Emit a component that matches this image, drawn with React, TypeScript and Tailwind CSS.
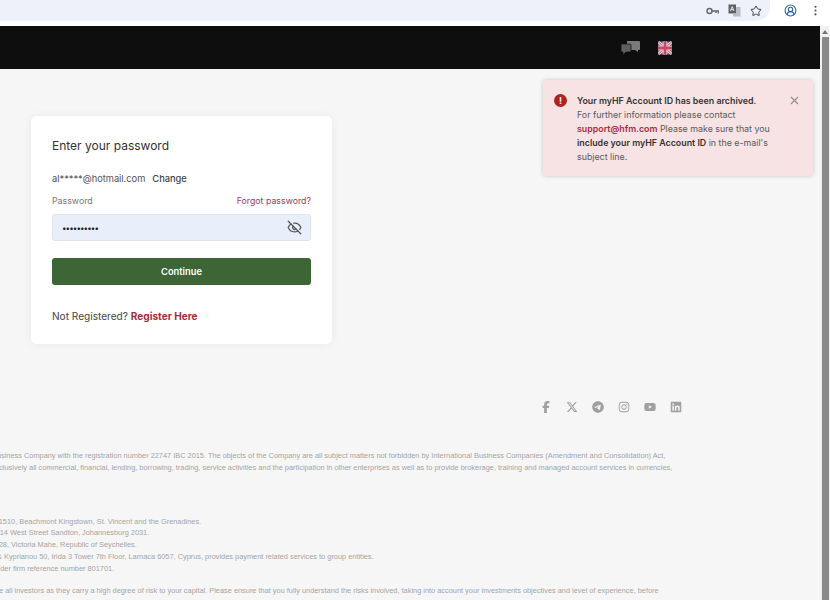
import React from 'react';
import { Star, EyeOff, X, CircleUserRound, EllipsisVertical } from 'lucide-react';
import { FaFacebookF, FaXTwitter, FaTelegram, FaInstagram, FaYoutube, FaLinkedin } from 'react-icons/fa6';

const legalTop = [
    { indent: '-ml-[8px]', text: 'Business Company with the registration number 22747 IBC 2015. The objects of the Company are all subject matters not forbidden by International Business Companies (Amendment and Consolidation) Act,' },
    { indent: '-ml-[23px]', text: 'and exclusively all commercial, financial, lending, borrowing, trading, service activities and the participation in other enterprises as well as to provide brokerage, training and managed account services in currencies,' },
];

const legalMiddle = [
    { indent: '-ml-[16px]', text: 'Box 1510, Beachmont Kingstown, St. Vincent and the Grenadines.' },
    { indent: '-ml-[12px]', text: 'at 114 West Street Sandton, Johannesburg 2031.' },
    { indent: '-ml-[16px]', text: 'Box 28, Victoria Mahe, Republic of Seychelles.' },
    { indent: '-ml-[3px]', text: '& Kyprianou 50, Irida 3 Tower 7th Floor, Larnaca 6057, Cyprus, provides payment related services to group entities.' },
    { indent: '-ml-[8px]', text: 'under firm reference number 801701.' },
];

function Flag() {
    return (
        <svg width="14" height="14" viewBox="0 0 15 14" className="rounded-[2px]">
            <rect width="15" height="14" fill="#5f6290" />
            <path d="M0 0l15 14M15 0L0 14" stroke="#e6d5dc" strokeWidth="3" />
            <path d="M0 0l15 14M15 0L0 14" stroke="#c9475f" strokeWidth="1" />
            <path d="M7.500 0v14M0 7h15" stroke="#e6d5dc" strokeWidth="5" />
            <path d="M7.500 0v14M0 7h15" stroke="#c9475f" strokeWidth="3" />
        </svg>
    );
}

function Chat() {
    return (
        <svg width="19" height="14" viewBox="0 0 19 14">
            <path d="M6 0h12a1 1 0 0 1 1 1v7a1 1 0 0 1-1 1h-1v2l-3-2H6z" fill="#7a7a7a" />
            <path d="M1 3h8a1 1 0 0 1 1 1v6a1 1 0 0 1-1 1H5l-3 3v-3H1a1 1 0 0 1-1-1V4a1 1 0 0 1 1-1z" stroke="#111" strokeWidth="0.8" fill="#5f5f5f" />
        </svg>
    );
}

function ChromeKey() {
    return (
        <svg width="13" height="8" viewBox="0 0 13 8" fill="none" stroke="#666a70" strokeWidth="1.500">
            <circle cx="3.500" cy="4" r="2.500" />
            <path d="M6 4h6.500v2.500M10 4v2" />
        </svg>
    );
}

function ChromeTranslate() {
    return (
        <svg width="13" height="13" viewBox="0 0 13 13">
            <rect x="0.500" y="0.500" width="7.500" height="9" fill="#5d6166" />
            <path d="M8 3h4.500v9.500H5V9.500h3z" fill="#b9bdc4" />
            <path d="M2.300 7l1.900-4.500L6 7M3 5.600h2.400" stroke="#fff" strokeWidth="0.800" fill="none" />
        </svg>
    );
}

export default function App() {
    return (
        <div className="w-[830px] h-[600px] overflow-hidden flex flex-col bg-white font-['Inter',sans-serif] text-[#3a3a3a]">
            {/* barra do navegador */}
            <div className="h-[26px] shrink-0 flex">
                <div className="flex-1 bg-[#eef1f9] rounded-br-[14px] h-[21px] flex items-center justify-end gap-[9px] pr-[8px]">
                    <ChromeKey />
                    <ChromeTranslate />
                    <Star size={12} className="text-[#3c4043]" />
                </div>
                <div className="w-[60px] h-[21px] flex items-center gap-[12px] pl-[14px]">
                    <CircleUserRound size={13} className="text-[#2a62b0]" />
                    <EllipsisVertical size={13} className="text-[#555]" />
                </div>
            </div>

            <div className="flex-1 flex min-h-0">
                <div className="w-[820px] flex flex-col bg-[#f6f6f6] relative">
                    {/* header */}
                    <div className="h-[43px] shrink-0 bg-[#0e0e0e] flex items-center justify-end pr-[148px] gap-[18px]">
                        <Chat />
                        <Flag />
                    </div>

                    {/* alerta */}
                    <div className="absolute left-[543px] top-[54px] w-[270px] h-[96px] bg-[#f7e3e4] rounded-[4px] shadow-[0_0_4px_rgba(0,0,0,0.2)] flex pl-[11px] pr-[11px] pt-[14px]">
                        <div className="w-[13px] h-[13px] rounded-full bg-[#b3201f] flex items-center justify-center text-white text-[9px] font-bold shrink-0">!</div>
                        <div className="ml-[10px] w-[211px] text-[8.85px] leading-[14px] text-[#5a5a5a]">
                            <div className="font-semibold text-[#333]">Your myHF Account ID has been archived.</div>
                            <div>For further information please contact</div>
                            <div><span className="font-semibold text-[#b5283f]">support@hfm.com</span> Please make sure that you</div>
                            <div><span className="font-semibold text-[#333]">include your myHF Account ID</span> in the e-mail&apos;s</div>
                            <div>subject line.</div>
                        </div>
                        <X size={13} className="text-[#8c8c8c] shrink-0" />
                    </div>

                    {/* login */}
                    <div className="ml-[31px] mt-[47px] w-[301px] h-[228px] shrink-0 bg-white rounded-[5px] shadow-[0_0_8px_rgba(0,0,0,0.06)] px-[21px] pt-[21px]">
                        <h1 className="text-[12px] leading-[16px] text-[#333] pt-[1px]">Enter your password</h1>
                        <div className="mt-[19px] text-[9.3px] leading-[12px] flex gap-[7px]">
                            <span className="text-[#555]">al*****@hotmail.com</span>
                            <span className="font-medium text-[#444]">Change</span>
                        </div>
                        <div className="mt-[10px] flex justify-between text-[8.8px] leading-[12px]">
                            <span className="text-[#777]">Password</span>
                            <span className="text-[#a63a5b]">Forgot password?</span>
                        </div>
                        <div className="mt-[7px] h-[27px] bg-[#e9eefb] border border-[#dfe3ee] rounded-[3px] flex items-center justify-between pl-[9px] pr-[8px]">
                            <span className="text-[8px] leading-none tracking-[-0.9px] text-[#222]">••••••••••</span>
                            <EyeOff size={15} className="text-[#555]" />
                        </div>
                        <button className="mt-[17px] w-full h-[27px] bg-[#3d6535] rounded-[3px] text-white text-[9.3px] font-semibold">Continue</button>
                        <div className="mt-[24px] text-[10.1px] leading-[14px] text-[#444]">
                            Not Registered? <span className="font-bold text-[#a72e3c]">Register Here</span>
                        </div>
                    </div>

                    {/* redes */}
                    <div className="mt-[56px] ml-[540px] flex items-center gap-[14px] text-[#a0a0a0] h-[14px] text-[12px]">
                        <FaFacebookF />
                        <FaXTwitter />
                        <FaTelegram />
                        <FaInstagram />
                        <FaYoutube />
                        <FaLinkedin />
                    </div>

                    {/* texto legal */}
                    <div className="mt-[36px] text-[7.38px] leading-[11.8px] text-[#a5a5a5] font-['Liberation_Sans',sans-serif] whitespace-nowrap">
                        {legalTop.map(l => <div key={l.indent} className={l.indent}>{l.text}</div>)}
                        <div className="h-[42px]" />
                        {legalMiddle.map(l => <div key={l.text} className={l.indent}>{l.text}</div>)}
                        <div className="h-[10px]" />
                        <div className="-ml-[1px]">e all investors as they carry a high degree of risk to your capital. Please ensure that you fully understand the risks involved, taking into account your investments objectives and level of experience, before</div>
                    </div>
                </div>

                {/* scrollbar */}
                <div className="w-[10px] bg-[#f1f1f1] flex flex-col items-center pt-[4px]">
                    <div className="w-0 h-0 border-l-[3px] border-r-[3px] border-b-[4px] border-l-transparent border-r-transparent border-b-[#777]" />
                    <div className="mt-[3px] w-[7px] flex-1 bg-[#8a8a8a]" />
                </div>
            </div>
        </div>
    );
}
